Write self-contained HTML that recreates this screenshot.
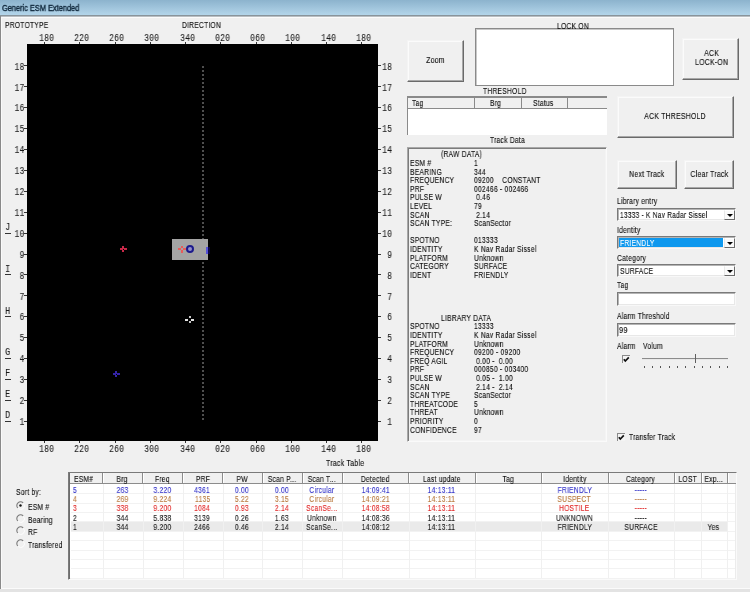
<!DOCTYPE html><html><head><meta charset="utf-8"><style>
*{margin:0;padding:0;box-sizing:border-box}
html,body{width:750px;height:592px;overflow:hidden;background:#f0f0f0;font-family:"Liberation Sans",sans-serif;font-size:8.5px;color:#0c0c0c}
.a{position:absolute}
.t{position:absolute;white-space:nowrap;line-height:10px;letter-spacing:.3px;transform:scaleX(0.79);transform-origin:0 0;will-change:transform;-webkit-text-stroke:0.12px currentColor}
.c{display:inline-block;white-space:nowrap;letter-spacing:.3px;transform:scaleX(0.79);will-change:transform;-webkit-text-stroke:0.12px currentColor}
#title{left:0;top:0;width:750px;height:15px;background:linear-gradient(#8cb3cd,#b3d5ea)}
.btn{position:absolute;background:#f0f0f0;border-top:1px solid #f4f4f4;border-left:1px solid #f4f4f4;border-right:1px solid #6a6a6a;border-bottom:1px solid #6a6a6a;box-shadow:inset -1px -1px 0 #a8a8a8, inset 1px 1px 0 #fbfbfb;display:flex;align-items:center;justify-content:center;text-align:center;line-height:9px;padding-bottom:1px}
.btn .c{transform:scaleX(.81)}
.sunk{position:absolute;background:#fff;border-top:1px solid #a0a0a0;border-left:1px solid #a0a0a0;border-right:1px solid #fafafa;border-bottom:1px solid #fafafa;box-shadow:inset 1px 1px 0 #6c6c6c, inset -1px -1px 0 #ececec}
.mono{position:absolute;white-space:nowrap;font-family:"Liberation Mono",monospace;font-size:10px;line-height:9px;color:#1a1a1a;will-change:transform;transform:scaleX(.84);transform-origin:0 0;-webkit-text-stroke:0.05px #1a1a1a}
.cb{position:absolute;background:#fff;border-top:1px solid #7a7a7a;border-left:1px solid #7a7a7a;border-right:1px solid #f8f8f8;border-bottom:1px solid #f8f8f8;box-shadow:inset 1px 1px 0 #b4b4b4, inset -1px -1px 0 #e8e8e8}
.dd{position:absolute;top:1px;right:0px;bottom:0px;width:11px;background:#fafafa;border-top:1px solid #fff;border-left:1px solid #e8e8e8;border-right:1px solid #6a6a6a;border-bottom:1px solid #6a6a6a}
.dd:after{content:"";position:absolute;left:2px;top:3px;border-left:3px solid transparent;border-right:3px solid transparent;border-top:3px solid #000}
</style></head><body>
<div class="a" id="title"></div>
<div class="t" style="left:2px;top:2.6px;color:#10283c;transform:scaleX(.87);letter-spacing:0;-webkit-text-stroke:0.4px #10283c">Generic ESM Extended</div>
<div class="a" style="left:0px;top:15px;width:750px;height:1px;background:#89949b;"></div>
<div class="a" style="left:0px;top:16px;width:750px;height:1px;background:#b9bec2;"></div>
<div class="a" style="left:0px;top:17px;width:750px;height:1px;background:#fbfbfb;"></div>
<div class="a" style="left:0px;top:16px;width:1px;height:576px;background:#8a8a8a;"></div>
<div class="a" style="left:1px;top:18px;width:1px;height:574px;background:#fafafa;"></div>
<div class="t" style="left:5px;top:20px;">PROTOTYPE</div>
<div class="t" style="left:182px;top:20px;">DIRECTION</div>
<div class="a" style="left:27px;top:44px;width:351px;height:397px;background:#000;"></div>
<div class="a" style="left:44px;top:42px;width:1px;height:2px;background:#333;"></div>
<div class="a" style="left:44px;top:441px;width:1px;height:2px;background:#333;"></div>
<div class="mono" style="left:38.7px;top:33.8px">180</div>
<div class="mono" style="left:38.7px;top:444.9px">180</div>
<div class="a" style="left:79px;top:42px;width:1px;height:2px;background:#333;"></div>
<div class="a" style="left:79px;top:441px;width:1px;height:2px;background:#333;"></div>
<div class="mono" style="left:73.9px;top:33.8px">220</div>
<div class="mono" style="left:73.9px;top:444.9px">220</div>
<div class="a" style="left:115px;top:42px;width:1px;height:2px;background:#333;"></div>
<div class="a" style="left:115px;top:441px;width:1px;height:2px;background:#333;"></div>
<div class="mono" style="left:109.2px;top:33.8px">260</div>
<div class="mono" style="left:109.2px;top:444.9px">260</div>
<div class="a" style="left:150px;top:42px;width:1px;height:2px;background:#333;"></div>
<div class="a" style="left:150px;top:441px;width:1px;height:2px;background:#333;"></div>
<div class="mono" style="left:144.4px;top:33.8px">300</div>
<div class="mono" style="left:144.4px;top:444.9px">300</div>
<div class="a" style="left:185px;top:42px;width:1px;height:2px;background:#333;"></div>
<div class="a" style="left:185px;top:441px;width:1px;height:2px;background:#333;"></div>
<div class="mono" style="left:179.6px;top:33.8px">340</div>
<div class="mono" style="left:179.6px;top:444.9px">340</div>
<div class="a" style="left:220px;top:42px;width:1px;height:2px;background:#333;"></div>
<div class="a" style="left:220px;top:441px;width:1px;height:2px;background:#333;"></div>
<div class="mono" style="left:214.8px;top:33.8px">020</div>
<div class="mono" style="left:214.8px;top:444.9px">020</div>
<div class="a" style="left:256px;top:42px;width:1px;height:2px;background:#333;"></div>
<div class="a" style="left:256px;top:441px;width:1px;height:2px;background:#333;"></div>
<div class="mono" style="left:250.1px;top:33.8px">060</div>
<div class="mono" style="left:250.1px;top:444.9px">060</div>
<div class="a" style="left:291px;top:42px;width:1px;height:2px;background:#333;"></div>
<div class="a" style="left:291px;top:441px;width:1px;height:2px;background:#333;"></div>
<div class="mono" style="left:285.3px;top:33.8px">100</div>
<div class="mono" style="left:285.3px;top:444.9px">100</div>
<div class="a" style="left:326px;top:42px;width:1px;height:2px;background:#333;"></div>
<div class="a" style="left:326px;top:441px;width:1px;height:2px;background:#333;"></div>
<div class="mono" style="left:320.5px;top:33.8px">140</div>
<div class="mono" style="left:320.5px;top:444.9px">140</div>
<div class="a" style="left:361px;top:42px;width:1px;height:2px;background:#333;"></div>
<div class="a" style="left:361px;top:441px;width:1px;height:2px;background:#333;"></div>
<div class="mono" style="left:355.8px;top:33.8px">180</div>
<div class="mono" style="left:355.8px;top:444.9px">180</div>
<div class="a" style="left:24px;top:65px;width:3px;height:1px;background:#333;"></div>
<div class="a" style="left:378px;top:65px;width:3px;height:1px;background:#333;"></div>
<div class="mono" style="left:0;width:24.4px;text-align:right;transform-origin:100% 0;top:62.6px">18</div>
<div class="mono" style="left:381.5px;top:62.6px">18</div>
<div class="a" style="left:24px;top:86px;width:3px;height:1px;background:#333;"></div>
<div class="a" style="left:378px;top:86px;width:3px;height:1px;background:#333;"></div>
<div class="mono" style="left:0;width:24.4px;text-align:right;transform-origin:100% 0;top:83.5px">17</div>
<div class="mono" style="left:381.5px;top:83.5px">17</div>
<div class="a" style="left:24px;top:107px;width:3px;height:1px;background:#333;"></div>
<div class="a" style="left:378px;top:107px;width:3px;height:1px;background:#333;"></div>
<div class="mono" style="left:0;width:24.4px;text-align:right;transform-origin:100% 0;top:104.4px">16</div>
<div class="mono" style="left:381.5px;top:104.4px">16</div>
<div class="a" style="left:24px;top:128px;width:3px;height:1px;background:#333;"></div>
<div class="a" style="left:378px;top:128px;width:3px;height:1px;background:#333;"></div>
<div class="mono" style="left:0;width:24.4px;text-align:right;transform-origin:100% 0;top:125.3px">15</div>
<div class="mono" style="left:381.5px;top:125.3px">15</div>
<div class="a" style="left:24px;top:149px;width:3px;height:1px;background:#333;"></div>
<div class="a" style="left:378px;top:149px;width:3px;height:1px;background:#333;"></div>
<div class="mono" style="left:0;width:24.4px;text-align:right;transform-origin:100% 0;top:146.2px">14</div>
<div class="mono" style="left:381.5px;top:146.2px">14</div>
<div class="a" style="left:24px;top:170px;width:3px;height:1px;background:#333;"></div>
<div class="a" style="left:378px;top:170px;width:3px;height:1px;background:#333;"></div>
<div class="mono" style="left:0;width:24.4px;text-align:right;transform-origin:100% 0;top:167.1px">13</div>
<div class="mono" style="left:381.5px;top:167.1px">13</div>
<div class="a" style="left:24px;top:191px;width:3px;height:1px;background:#333;"></div>
<div class="a" style="left:378px;top:191px;width:3px;height:1px;background:#333;"></div>
<div class="mono" style="left:0;width:24.4px;text-align:right;transform-origin:100% 0;top:188.0px">12</div>
<div class="mono" style="left:381.5px;top:188.0px">12</div>
<div class="a" style="left:24px;top:212px;width:3px;height:1px;background:#333;"></div>
<div class="a" style="left:378px;top:212px;width:3px;height:1px;background:#333;"></div>
<div class="mono" style="left:0;width:24.4px;text-align:right;transform-origin:100% 0;top:208.9px">11</div>
<div class="mono" style="left:381.5px;top:208.9px">11</div>
<div class="a" style="left:24px;top:233px;width:3px;height:1px;background:#333;"></div>
<div class="a" style="left:378px;top:233px;width:3px;height:1px;background:#333;"></div>
<div class="mono" style="left:0;width:24.4px;text-align:right;transform-origin:100% 0;top:229.8px">10</div>
<div class="mono" style="left:381.5px;top:229.8px">10</div>
<div class="a" style="left:24px;top:254px;width:3px;height:1px;background:#333;"></div>
<div class="a" style="left:378px;top:254px;width:3px;height:1px;background:#333;"></div>
<div class="mono" style="left:0;width:24.4px;text-align:right;transform-origin:100% 0;top:250.7px">9</div>
<div class="mono" style="left:381.5px;top:250.7px">&nbsp;9</div>
<div class="a" style="left:24px;top:274px;width:3px;height:1px;background:#333;"></div>
<div class="a" style="left:378px;top:274px;width:3px;height:1px;background:#333;"></div>
<div class="mono" style="left:0;width:24.4px;text-align:right;transform-origin:100% 0;top:271.6px">8</div>
<div class="mono" style="left:381.5px;top:271.6px">&nbsp;8</div>
<div class="a" style="left:24px;top:295px;width:3px;height:1px;background:#333;"></div>
<div class="a" style="left:378px;top:295px;width:3px;height:1px;background:#333;"></div>
<div class="mono" style="left:0;width:24.4px;text-align:right;transform-origin:100% 0;top:292.5px">7</div>
<div class="mono" style="left:381.5px;top:292.5px">&nbsp;7</div>
<div class="a" style="left:24px;top:316px;width:3px;height:1px;background:#333;"></div>
<div class="a" style="left:378px;top:316px;width:3px;height:1px;background:#333;"></div>
<div class="mono" style="left:0;width:24.4px;text-align:right;transform-origin:100% 0;top:313.4px">6</div>
<div class="mono" style="left:381.5px;top:313.4px">&nbsp;6</div>
<div class="a" style="left:24px;top:337px;width:3px;height:1px;background:#333;"></div>
<div class="a" style="left:378px;top:337px;width:3px;height:1px;background:#333;"></div>
<div class="mono" style="left:0;width:24.4px;text-align:right;transform-origin:100% 0;top:334.3px">5</div>
<div class="mono" style="left:381.5px;top:334.3px">&nbsp;5</div>
<div class="a" style="left:24px;top:358px;width:3px;height:1px;background:#333;"></div>
<div class="a" style="left:378px;top:358px;width:3px;height:1px;background:#333;"></div>
<div class="mono" style="left:0;width:24.4px;text-align:right;transform-origin:100% 0;top:355.2px">4</div>
<div class="mono" style="left:381.5px;top:355.2px">&nbsp;4</div>
<div class="a" style="left:24px;top:379px;width:3px;height:1px;background:#333;"></div>
<div class="a" style="left:378px;top:379px;width:3px;height:1px;background:#333;"></div>
<div class="mono" style="left:0;width:24.4px;text-align:right;transform-origin:100% 0;top:376.1px">3</div>
<div class="mono" style="left:381.5px;top:376.1px">&nbsp;3</div>
<div class="a" style="left:24px;top:400px;width:3px;height:1px;background:#333;"></div>
<div class="a" style="left:378px;top:400px;width:3px;height:1px;background:#333;"></div>
<div class="mono" style="left:0;width:24.4px;text-align:right;transform-origin:100% 0;top:397.0px">2</div>
<div class="mono" style="left:381.5px;top:397.0px">&nbsp;2</div>
<div class="a" style="left:24px;top:421px;width:3px;height:1px;background:#333;"></div>
<div class="a" style="left:378px;top:421px;width:3px;height:1px;background:#333;"></div>
<div class="mono" style="left:0;width:24.4px;text-align:right;transform-origin:100% 0;top:417.9px">1</div>
<div class="mono" style="left:381.5px;top:417.9px">&nbsp;1</div>
<div class="mono" style="left:5px;top:223.0px;font-size:10.5px">J</div>
<div class="a" style="left:5px;top:233px;width:6px;height:1px;background:#333;"></div>
<div class="mono" style="left:5px;top:264.8px;font-size:10.5px">I</div>
<div class="a" style="left:5px;top:274px;width:6px;height:1px;background:#333;"></div>
<div class="mono" style="left:5px;top:306.6px;font-size:10.5px">H</div>
<div class="a" style="left:5px;top:316px;width:6px;height:1px;background:#333;"></div>
<div class="mono" style="left:5px;top:348.4px;font-size:10.5px">G</div>
<div class="a" style="left:5px;top:358px;width:6px;height:1px;background:#333;"></div>
<div class="mono" style="left:5px;top:369.3px;font-size:10.5px">F</div>
<div class="a" style="left:5px;top:379px;width:6px;height:1px;background:#333;"></div>
<div class="mono" style="left:5px;top:390.2px;font-size:10.5px">E</div>
<div class="a" style="left:5px;top:400px;width:6px;height:1px;background:#333;"></div>
<div class="mono" style="left:5px;top:411.1px;font-size:10.5px">D</div>
<div class="a" style="left:5px;top:421px;width:6px;height:1px;background:#333;"></div>
<div class="a" style="left:202px;top:66px;width:2px;height:2px;background:#4e4e4e;"></div>
<div class="a" style="left:202px;top:70px;width:2px;height:2px;background:#4e4e4e;"></div>
<div class="a" style="left:202px;top:74px;width:2px;height:2px;background:#4e4e4e;"></div>
<div class="a" style="left:202px;top:78px;width:2px;height:2px;background:#4e4e4e;"></div>
<div class="a" style="left:202px;top:82px;width:2px;height:2px;background:#4e4e4e;"></div>
<div class="a" style="left:202px;top:86px;width:2px;height:2px;background:#4e4e4e;"></div>
<div class="a" style="left:202px;top:90px;width:2px;height:2px;background:#4e4e4e;"></div>
<div class="a" style="left:202px;top:94px;width:2px;height:2px;background:#4e4e4e;"></div>
<div class="a" style="left:202px;top:98px;width:2px;height:2px;background:#4e4e4e;"></div>
<div class="a" style="left:202px;top:102px;width:2px;height:2px;background:#4e4e4e;"></div>
<div class="a" style="left:202px;top:106px;width:2px;height:2px;background:#4e4e4e;"></div>
<div class="a" style="left:202px;top:110px;width:2px;height:2px;background:#4e4e4e;"></div>
<div class="a" style="left:202px;top:114px;width:2px;height:2px;background:#4e4e4e;"></div>
<div class="a" style="left:202px;top:118px;width:2px;height:2px;background:#4e4e4e;"></div>
<div class="a" style="left:202px;top:122px;width:2px;height:2px;background:#4e4e4e;"></div>
<div class="a" style="left:202px;top:126px;width:2px;height:2px;background:#4e4e4e;"></div>
<div class="a" style="left:202px;top:130px;width:2px;height:2px;background:#4e4e4e;"></div>
<div class="a" style="left:202px;top:134px;width:2px;height:2px;background:#4e4e4e;"></div>
<div class="a" style="left:202px;top:138px;width:2px;height:2px;background:#4e4e4e;"></div>
<div class="a" style="left:202px;top:142px;width:2px;height:2px;background:#4e4e4e;"></div>
<div class="a" style="left:202px;top:146px;width:2px;height:2px;background:#4e4e4e;"></div>
<div class="a" style="left:202px;top:150px;width:2px;height:2px;background:#4e4e4e;"></div>
<div class="a" style="left:202px;top:154px;width:2px;height:2px;background:#4e4e4e;"></div>
<div class="a" style="left:202px;top:158px;width:2px;height:2px;background:#4e4e4e;"></div>
<div class="a" style="left:202px;top:162px;width:2px;height:2px;background:#4e4e4e;"></div>
<div class="a" style="left:202px;top:166px;width:2px;height:2px;background:#4e4e4e;"></div>
<div class="a" style="left:202px;top:170px;width:2px;height:2px;background:#4e4e4e;"></div>
<div class="a" style="left:202px;top:174px;width:2px;height:2px;background:#4e4e4e;"></div>
<div class="a" style="left:202px;top:178px;width:2px;height:2px;background:#4e4e4e;"></div>
<div class="a" style="left:202px;top:182px;width:2px;height:2px;background:#4e4e4e;"></div>
<div class="a" style="left:202px;top:186px;width:2px;height:2px;background:#4e4e4e;"></div>
<div class="a" style="left:202px;top:190px;width:2px;height:2px;background:#4e4e4e;"></div>
<div class="a" style="left:202px;top:194px;width:2px;height:2px;background:#4e4e4e;"></div>
<div class="a" style="left:202px;top:198px;width:2px;height:2px;background:#4e4e4e;"></div>
<div class="a" style="left:202px;top:202px;width:2px;height:2px;background:#4e4e4e;"></div>
<div class="a" style="left:202px;top:206px;width:2px;height:2px;background:#4e4e4e;"></div>
<div class="a" style="left:202px;top:210px;width:2px;height:2px;background:#4e4e4e;"></div>
<div class="a" style="left:202px;top:214px;width:2px;height:2px;background:#4e4e4e;"></div>
<div class="a" style="left:202px;top:218px;width:2px;height:2px;background:#4e4e4e;"></div>
<div class="a" style="left:202px;top:222px;width:2px;height:2px;background:#4e4e4e;"></div>
<div class="a" style="left:202px;top:226px;width:2px;height:2px;background:#4e4e4e;"></div>
<div class="a" style="left:202px;top:230px;width:2px;height:2px;background:#4e4e4e;"></div>
<div class="a" style="left:202px;top:234px;width:2px;height:2px;background:#4e4e4e;"></div>
<div class="a" style="left:202px;top:238px;width:2px;height:2px;background:#4e4e4e;"></div>
<div class="a" style="left:202px;top:242px;width:2px;height:2px;background:#4e4e4e;"></div>
<div class="a" style="left:202px;top:246px;width:2px;height:2px;background:#4e4e4e;"></div>
<div class="a" style="left:202px;top:250px;width:2px;height:2px;background:#4e4e4e;"></div>
<div class="a" style="left:202px;top:254px;width:2px;height:2px;background:#4e4e4e;"></div>
<div class="a" style="left:202px;top:258px;width:2px;height:2px;background:#4e4e4e;"></div>
<div class="a" style="left:202px;top:262px;width:2px;height:2px;background:#4e4e4e;"></div>
<div class="a" style="left:202px;top:266px;width:2px;height:2px;background:#4e4e4e;"></div>
<div class="a" style="left:202px;top:270px;width:2px;height:2px;background:#4e4e4e;"></div>
<div class="a" style="left:202px;top:274px;width:2px;height:2px;background:#4e4e4e;"></div>
<div class="a" style="left:202px;top:278px;width:2px;height:2px;background:#4e4e4e;"></div>
<div class="a" style="left:202px;top:282px;width:2px;height:2px;background:#4e4e4e;"></div>
<div class="a" style="left:202px;top:286px;width:2px;height:2px;background:#4e4e4e;"></div>
<div class="a" style="left:202px;top:290px;width:2px;height:2px;background:#4e4e4e;"></div>
<div class="a" style="left:202px;top:294px;width:2px;height:2px;background:#4e4e4e;"></div>
<div class="a" style="left:202px;top:298px;width:2px;height:2px;background:#4e4e4e;"></div>
<div class="a" style="left:202px;top:302px;width:2px;height:2px;background:#4e4e4e;"></div>
<div class="a" style="left:202px;top:306px;width:2px;height:2px;background:#4e4e4e;"></div>
<div class="a" style="left:202px;top:310px;width:2px;height:2px;background:#4e4e4e;"></div>
<div class="a" style="left:202px;top:314px;width:2px;height:2px;background:#4e4e4e;"></div>
<div class="a" style="left:202px;top:318px;width:2px;height:2px;background:#4e4e4e;"></div>
<div class="a" style="left:202px;top:322px;width:2px;height:2px;background:#4e4e4e;"></div>
<div class="a" style="left:202px;top:326px;width:2px;height:2px;background:#4e4e4e;"></div>
<div class="a" style="left:202px;top:330px;width:2px;height:2px;background:#4e4e4e;"></div>
<div class="a" style="left:202px;top:334px;width:2px;height:2px;background:#4e4e4e;"></div>
<div class="a" style="left:202px;top:338px;width:2px;height:2px;background:#4e4e4e;"></div>
<div class="a" style="left:202px;top:342px;width:2px;height:2px;background:#4e4e4e;"></div>
<div class="a" style="left:202px;top:346px;width:2px;height:2px;background:#4e4e4e;"></div>
<div class="a" style="left:202px;top:350px;width:2px;height:2px;background:#4e4e4e;"></div>
<div class="a" style="left:202px;top:354px;width:2px;height:2px;background:#4e4e4e;"></div>
<div class="a" style="left:202px;top:358px;width:2px;height:2px;background:#4e4e4e;"></div>
<div class="a" style="left:202px;top:362px;width:2px;height:2px;background:#4e4e4e;"></div>
<div class="a" style="left:202px;top:366px;width:2px;height:2px;background:#4e4e4e;"></div>
<div class="a" style="left:202px;top:370px;width:2px;height:2px;background:#4e4e4e;"></div>
<div class="a" style="left:202px;top:374px;width:2px;height:2px;background:#4e4e4e;"></div>
<div class="a" style="left:202px;top:378px;width:2px;height:2px;background:#4e4e4e;"></div>
<div class="a" style="left:202px;top:382px;width:2px;height:2px;background:#4e4e4e;"></div>
<div class="a" style="left:202px;top:386px;width:2px;height:2px;background:#4e4e4e;"></div>
<div class="a" style="left:202px;top:390px;width:2px;height:2px;background:#4e4e4e;"></div>
<div class="a" style="left:202px;top:394px;width:2px;height:2px;background:#4e4e4e;"></div>
<div class="a" style="left:202px;top:398px;width:2px;height:2px;background:#4e4e4e;"></div>
<div class="a" style="left:202px;top:402px;width:2px;height:2px;background:#4e4e4e;"></div>
<div class="a" style="left:202px;top:406px;width:2px;height:2px;background:#4e4e4e;"></div>
<div class="a" style="left:202px;top:410px;width:2px;height:2px;background:#4e4e4e;"></div>
<div class="a" style="left:202px;top:414px;width:2px;height:2px;background:#4e4e4e;"></div>
<div class="a" style="left:202px;top:418px;width:2px;height:2px;background:#4e4e4e;"></div>
<div class="a" style="left:172px;top:239px;width:36px;height:21px;background:#a4a4a4;"></div>
<div class="a" style="left:205.5px;top:246.5px;width:2.5px;height:7px;background:#5450d8;"></div>
<div class="a" style="left:208px;top:246.5px;width:2px;height:7px;background:#0c0840;"></div>
<div class="a" style="left:178.0px;top:248.0px;width:3px;height:2px;background:#e85a5a;"></div>
<div class="a" style="left:183.0px;top:248.0px;width:3px;height:2px;background:#e85a5a;"></div>
<div class="a" style="left:181.0px;top:245.5px;width:2px;height:2.5px;background:#e85a5a;"></div>
<div class="a" style="left:181.0px;top:250.0px;width:2px;height:2.5px;background:#e85a5a;"></div>
<div class="a" style="left:119.5px;top:248.0px;width:3px;height:2px;background:#c82848;"></div>
<div class="a" style="left:123.5px;top:248.0px;width:3px;height:2px;background:#c82848;"></div>
<div class="a" style="left:122.0px;top:246.0px;width:2px;height:2.5px;background:#c82848;"></div>
<div class="a" style="left:122.0px;top:249.5px;width:2px;height:2.5px;background:#c82848;"></div>
<div class="a" style="left:185px;top:318.5px;width:3px;height:2px;background:#e4e4e4;"></div>
<div class="a" style="left:190.5px;top:318.5px;width:3px;height:2px;background:#e4e4e4;"></div>
<div class="a" style="left:188.5px;top:315.5px;width:2px;height:2.5px;background:#c4c4c4;"></div>
<div class="a" style="left:188.5px;top:320.5px;width:2px;height:2.5px;background:#c4c4c4;"></div>
<div class="a" style="left:112.5px;top:373.0px;width:3px;height:2px;background:#3424a8;"></div>
<div class="a" style="left:116.5px;top:373.0px;width:3px;height:2px;background:#3424a8;"></div>
<div class="a" style="left:115.0px;top:371.0px;width:2px;height:2.5px;background:#3424a8;"></div>
<div class="a" style="left:115.0px;top:374.5px;width:2px;height:2.5px;background:#3424a8;"></div>
<div class="a" style="left:185.5px;top:244.5px;width:8.5px;height:8.5px;background:#9490c8;border-radius:50%;border:2px solid #1c1a8c"></div>
<div class="btn" style="left:407px;top:40px;width:57px;height:42px"><span class="c">Zoom</span></div>
<div class="btn" style="left:682px;top:38px;width:57px;height:42px"><span class="c"><span style="line-height:8.8px;display:inline-block;position:relative;left:1.5px;top:-0.6px">ACK<br>LOCK-ON</span></span></div>
<div class="btn" style="left:617px;top:96px;width:117px;height:42px"><span class="c">ACK THRESHOLD</span></div>
<div class="btn" style="left:617px;top:160px;width:60px;height:29px"><span class="c">Next Track</span></div>
<div class="btn" style="left:684px;top:160px;width:50px;height:29px"><span class="c">Clear Track</span></div>
<div class="a" style="left:475px;top:28px;width:199px;height:58px;background:#fff;border:1px solid #8a8a8a;box-shadow:inset 1px 1px 0 #c8c8c8"></div>
<div class="t" style="left:557px;top:20.5px;">LOCK ON</div>
<div class="t" style="left:483px;top:86px;">THRESHOLD</div>
<div class="a" style="left:407px;top:96px;width:200px;height:39px;background:#fff;border-top:2px solid #8a8a8a;border-left:1px solid #8a8a8a"></div>
<div class="a" style="left:408px;top:98px;width:199px;height:11px;background:#f0f0f0;border-bottom:1px solid #8a8a8a"></div>
<div class="a" style="left:474px;top:98px;width:1px;height:11px;background:#8a8a8a;"></div>
<div class="a" style="left:521px;top:98px;width:1px;height:11px;background:#8a8a8a;"></div>
<div class="a" style="left:567px;top:98px;width:1px;height:11px;background:#8a8a8a;"></div>
<div class="t" style="left:412px;top:98px;">Tag</div>
<div class="t" style="left:490px;top:98px;">Brg</div>
<div class="t" style="left:533px;top:98px;">Status</div>
<div class="t" style="left:490px;top:135px;">Track Data</div>
<div class="sunk" style="left:407px;top:147px;width:200px;height:295px;background:#f0f0f0;border-top-color:#a8a8a8;border-left-color:#a8a8a8;box-shadow:inset 1px 1px 0 #7c7c7c, inset -1px -1px 0 #f4f4f4"></div>
<div class="t" style="left:441px;top:149.3px;">(RAW DATA)</div>
<div class="t" style="left:409.5px;top:157.9px;">ESM #</div>
<div class="t" style="left:473.5px;top:157.9px;">1</div>
<div class="t" style="left:409.5px;top:166.5px;">BEARING</div>
<div class="t" style="left:473.5px;top:166.5px;">344</div>
<div class="t" style="left:409.5px;top:175.1px;">FREQUENCY</div>
<div class="t" style="left:473.5px;top:175.1px;">09200&nbsp;&nbsp;&nbsp;&nbsp;CONSTANT</div>
<div class="t" style="left:409.5px;top:183.7px;">PRF</div>
<div class="t" style="left:473.5px;top:183.7px;">002466 - 002466</div>
<div class="t" style="left:409.5px;top:192.3px;">PULSE W</div>
<div class="t" style="left:473.5px;top:192.3px;">&nbsp;0.46</div>
<div class="t" style="left:409.5px;top:200.9px;">LEVEL</div>
<div class="t" style="left:473.5px;top:200.9px;">79</div>
<div class="t" style="left:409.5px;top:209.5px;">SCAN</div>
<div class="t" style="left:473.5px;top:209.5px;">&nbsp;2.14</div>
<div class="t" style="left:409.5px;top:218.1px;">SCAN TYPE:</div>
<div class="t" style="left:473.5px;top:218.1px;">ScanSector</div>
<div class="t" style="left:409.5px;top:235.3px;">SPOTNO</div>
<div class="t" style="left:473.5px;top:235.3px;">013333</div>
<div class="t" style="left:409.5px;top:243.9px;">IDENTITY</div>
<div class="t" style="left:473.5px;top:243.9px;">K Nav Radar Sissel</div>
<div class="t" style="left:409.5px;top:252.5px;">PLATFORM</div>
<div class="t" style="left:473.5px;top:252.5px;">Unknown</div>
<div class="t" style="left:409.5px;top:261.1px;">CATEGORY</div>
<div class="t" style="left:473.5px;top:261.1px;">SURFACE</div>
<div class="t" style="left:409.5px;top:269.7px;">IDENT</div>
<div class="t" style="left:473.5px;top:269.7px;">FRIENDLY</div>
<div class="t" style="left:441px;top:312.7px;">LIBRARY DATA</div>
<div class="t" style="left:409.5px;top:321.3px;">SPOTNO</div>
<div class="t" style="left:473.5px;top:321.3px;">13333</div>
<div class="t" style="left:409.5px;top:329.9px;">IDENTITY</div>
<div class="t" style="left:473.5px;top:329.9px;">K Nav Radar Sissel</div>
<div class="t" style="left:409.5px;top:338.5px;">PLATFORM</div>
<div class="t" style="left:473.5px;top:338.5px;">Unknown</div>
<div class="t" style="left:409.5px;top:347.1px;">FREQUENCY</div>
<div class="t" style="left:473.5px;top:347.1px;">09200 - 09200</div>
<div class="t" style="left:409.5px;top:355.7px;">FREQ AGIL</div>
<div class="t" style="left:473.5px;top:355.7px;">&nbsp;0.00 -&nbsp; 0.00</div>
<div class="t" style="left:409.5px;top:364.3px;">PRF</div>
<div class="t" style="left:473.5px;top:364.3px;">000850 - 003400</div>
<div class="t" style="left:409.5px;top:372.9px;">PULSE W</div>
<div class="t" style="left:473.5px;top:372.9px;">&nbsp;0.05 -&nbsp; 1.00</div>
<div class="t" style="left:409.5px;top:381.5px;">SCAN</div>
<div class="t" style="left:473.5px;top:381.5px;">&nbsp;2.14 -&nbsp; 2.14</div>
<div class="t" style="left:409.5px;top:390.1px;">SCAN TYPE</div>
<div class="t" style="left:473.5px;top:390.1px;">ScanSector</div>
<div class="t" style="left:409.5px;top:398.7px;">THREATCODE</div>
<div class="t" style="left:473.5px;top:398.7px;">5</div>
<div class="t" style="left:409.5px;top:407.3px;">THREAT</div>
<div class="t" style="left:473.5px;top:407.3px;">Unknown</div>
<div class="t" style="left:409.5px;top:415.9px;">PRIORITY</div>
<div class="t" style="left:473.5px;top:415.9px;">0</div>
<div class="t" style="left:409.5px;top:424.5px;">CONFIDENCE</div>
<div class="t" style="left:473.5px;top:424.5px;">97</div>
<div class="t" style="left:617px;top:196px;">Library entry</div>
<div class="cb" style="left:617px;top:208px;width:119px;height:13px"><div class="t" style="left:2px;top:1px;transform:scaleX(.775)">13333 - K Nav Radar Sissel</div><div class="dd"></div></div>
<div class="t" style="left:617px;top:225px;">Identity</div>
<div class="cb" style="left:617px;top:236px;width:119px;height:13px"><div class="a" style="left:1px;top:1px;right:12px;bottom:1px;background:#0e98ee"></div><div class="t" style="left:2px;top:1px;color:#fff">FRIENDLY</div><div class="dd"></div></div>
<div class="t" style="left:617px;top:253px;">Category</div>
<div class="cb" style="left:617px;top:264px;width:119px;height:13px"><div class="t" style="left:2px;top:1px">SURFACE</div><div class="dd"></div></div>
<div class="t" style="left:617px;top:280.3px;">Tag</div>
<div class="cb" style="left:617px;top:292px;width:119px;height:14px"></div>
<div class="t" style="left:617px;top:311px;">Alarm Threshold</div>
<div class="cb" style="left:617px;top:323px;width:119px;height:14px"><div class="t" style="left:0.5px;top:0.6px;font-size:9.5px">99</div></div>
<div class="t" style="left:617px;top:341px;">Alarm</div>
<div class="t" style="left:643px;top:341px;">Volum</div>
<div class="a" style="left:622px;top:355px;width:8px;height:8px;background:#f4f4f4;border-top:1px solid #8a8a8a;border-left:1px solid #8a8a8a"></div>
<svg class="a" style="left:622px;top:355px" width="8" height="8"><path d="M1.8 4.2 L3.3 6 L6.8 2.4" stroke="#111" stroke-width="1.7" fill="none"/></svg>
<div class="a" style="left:642px;top:358px;width:86px;height:2px;background:#8c8c8c;border-bottom:1px solid #e8e8e8"></div>
<div class="a" style="left:694.5px;top:354px;width:1.2px;height:9px;background:#606060;"></div>
<div class="a" style="left:643.5px;top:366px;width:1px;height:2px;background:#555;"></div>
<div class="a" style="left:651.9px;top:366px;width:1px;height:2px;background:#555;"></div>
<div class="a" style="left:660.2px;top:366px;width:1px;height:2px;background:#555;"></div>
<div class="a" style="left:668.5px;top:366px;width:1px;height:2px;background:#555;"></div>
<div class="a" style="left:676.9px;top:366px;width:1px;height:2px;background:#555;"></div>
<div class="a" style="left:685.2px;top:366px;width:1px;height:2px;background:#555;"></div>
<div class="a" style="left:693.6px;top:366px;width:1px;height:2px;background:#555;"></div>
<div class="a" style="left:702.0px;top:366px;width:1px;height:2px;background:#555;"></div>
<div class="a" style="left:710.3px;top:366px;width:1px;height:2px;background:#555;"></div>
<div class="a" style="left:718.6px;top:366px;width:1px;height:2px;background:#555;"></div>
<div class="a" style="left:727.0px;top:366px;width:1px;height:2px;background:#555;"></div>
<div class="a" style="left:617px;top:433px;width:8px;height:8px;background:#f4f4f4;border-top:1px solid #8a8a8a;border-left:1px solid #8a8a8a"></div>
<svg class="a" style="left:617px;top:433px" width="8" height="8"><path d="M1.8 4.2 L3.3 6 L6.8 2.4" stroke="#111" stroke-width="1.7" fill="none"/></svg>
<div class="t" style="left:629px;top:432px;">Transfer Track</div>
<div class="t" style="left:326px;top:458.3px;transform:scaleX(.82)">Track Table</div>
<div class="sunk" style="left:68px;top:472px;width:669px;height:108px;background:#fff;border-top-color:#7a7a7a;border-left-color:#7a7a7a"></div>
<div class="a" style="left:70px;top:473px;width:666px;height:11px;background:#f0f0f0;border-bottom:1px solid #8c8c8c"></div>
<div class="a" style="left:102px;top:473px;width:1px;height:11px;background:#8c8c8c;"></div>
<div class="a" style="left:103px;top:473px;width:1px;height:10px;background:#fff;"></div>
<div class="t" style="left:74px;top:474.2px;">ESM#</div>
<div class="a" style="left:142px;top:473px;width:1px;height:11px;background:#8c8c8c;"></div>
<div class="a" style="left:143px;top:473px;width:1px;height:10px;background:#fff;"></div>
<div class="a" style="left:102.5px;top:473.7px;width:40.0px;height:11px;text-align:center;line-height:11px"><span class="c">Brg</span></div>
<div class="a" style="left:182px;top:473px;width:1px;height:11px;background:#8c8c8c;"></div>
<div class="a" style="left:183px;top:473px;width:1px;height:10px;background:#fff;"></div>
<div class="a" style="left:142.5px;top:473.7px;width:40.0px;height:11px;text-align:center;line-height:11px"><span class="c">Freq</span></div>
<div class="a" style="left:222px;top:473px;width:1px;height:11px;background:#8c8c8c;"></div>
<div class="a" style="left:223px;top:473px;width:1px;height:10px;background:#fff;"></div>
<div class="a" style="left:182.5px;top:473.7px;width:40.0px;height:11px;text-align:center;line-height:11px"><span class="c">PRF</span></div>
<div class="a" style="left:262px;top:473px;width:1px;height:11px;background:#8c8c8c;"></div>
<div class="a" style="left:263px;top:473px;width:1px;height:10px;background:#fff;"></div>
<div class="a" style="left:222.5px;top:473.7px;width:39.69999999999999px;height:11px;text-align:center;line-height:11px"><span class="c">PW</span></div>
<div class="a" style="left:302px;top:473px;width:1px;height:11px;background:#8c8c8c;"></div>
<div class="a" style="left:303px;top:473px;width:1px;height:10px;background:#fff;"></div>
<div class="a" style="left:262.2px;top:473.7px;width:39.80000000000001px;height:11px;text-align:center;line-height:11px"><span class="c">Scan P...</span></div>
<div class="a" style="left:342px;top:473px;width:1px;height:11px;background:#8c8c8c;"></div>
<div class="a" style="left:343px;top:473px;width:1px;height:10px;background:#fff;"></div>
<div class="a" style="left:302px;top:473.7px;width:40px;height:11px;text-align:center;line-height:11px"><span class="c">Scan T...</span></div>
<div class="a" style="left:408px;top:473px;width:1px;height:11px;background:#8c8c8c;"></div>
<div class="a" style="left:409px;top:473px;width:1px;height:10px;background:#fff;"></div>
<div class="a" style="left:342px;top:473.7px;width:66.5px;height:11px;text-align:center;line-height:11px"><span class="c">Detected</span></div>
<div class="a" style="left:475px;top:473px;width:1px;height:11px;background:#8c8c8c;"></div>
<div class="a" style="left:476px;top:473px;width:1px;height:10px;background:#fff;"></div>
<div class="a" style="left:408.5px;top:473.7px;width:66.5px;height:11px;text-align:center;line-height:11px"><span class="c">Last update</span></div>
<div class="a" style="left:541px;top:473px;width:1px;height:11px;background:#8c8c8c;"></div>
<div class="a" style="left:542px;top:473px;width:1px;height:10px;background:#fff;"></div>
<div class="a" style="left:475px;top:473.7px;width:66.20000000000005px;height:11px;text-align:center;line-height:11px"><span class="c">Tag</span></div>
<div class="a" style="left:608px;top:473px;width:1px;height:11px;background:#8c8c8c;"></div>
<div class="a" style="left:609px;top:473px;width:1px;height:10px;background:#fff;"></div>
<div class="a" style="left:541.2px;top:473.7px;width:66.5px;height:11px;text-align:center;line-height:11px"><span class="c">Identity</span></div>
<div class="a" style="left:674px;top:473px;width:1px;height:11px;background:#8c8c8c;"></div>
<div class="a" style="left:675px;top:473px;width:1px;height:10px;background:#fff;"></div>
<div class="a" style="left:607.7px;top:473.7px;width:66.29999999999995px;height:11px;text-align:center;line-height:11px"><span class="c">Category</span></div>
<div class="a" style="left:701px;top:473px;width:1px;height:11px;background:#8c8c8c;"></div>
<div class="a" style="left:702px;top:473px;width:1px;height:10px;background:#fff;"></div>
<div class="a" style="left:674px;top:473.7px;width:26.700000000000045px;height:11px;text-align:center;line-height:11px"><span class="c">LOST</span></div>
<div class="a" style="left:727px;top:473px;width:1px;height:11px;background:#8c8c8c;"></div>
<div class="a" style="left:728px;top:473px;width:1px;height:10px;background:#fff;"></div>
<div class="a" style="left:700.7px;top:473.7px;width:26.0px;height:11px;text-align:center;line-height:11px"><span class="c">Exp...</span></div>
<div class="a" style="left:71px;top:493.4px;width:664px;height:1px;background:#f2f2f2;"></div>
<div class="a" style="left:71px;top:502.7px;width:664px;height:1px;background:#f2f2f2;"></div>
<div class="a" style="left:71px;top:512.0px;width:664px;height:1px;background:#f2f2f2;"></div>
<div class="a" style="left:71px;top:521.4px;width:664px;height:1px;background:#f2f2f2;"></div>
<div class="a" style="left:71px;top:530.8px;width:664px;height:1px;background:#f2f2f2;"></div>
<div class="a" style="left:71px;top:540.1px;width:664px;height:1px;background:#f2f2f2;"></div>
<div class="a" style="left:71px;top:549.5px;width:664px;height:1px;background:#f2f2f2;"></div>
<div class="a" style="left:71px;top:558.8px;width:664px;height:1px;background:#f2f2f2;"></div>
<div class="a" style="left:71px;top:568.1px;width:664px;height:1px;background:#f2f2f2;"></div>
<div class="a" style="left:71px;top:577.5px;width:664px;height:1px;background:#f2f2f2;"></div>
<div class="a" style="left:71px;top:521.9px;width:656px;height:9.35px;background:#eaeaea;"></div>
<div class="a" style="left:102.5px;top:484px;width:1px;height:94px;background:#f0f0f0;"></div>
<div class="a" style="left:142.5px;top:484px;width:1px;height:94px;background:#f0f0f0;"></div>
<div class="a" style="left:182.5px;top:484px;width:1px;height:94px;background:#f0f0f0;"></div>
<div class="a" style="left:222.5px;top:484px;width:1px;height:94px;background:#f0f0f0;"></div>
<div class="a" style="left:262.2px;top:484px;width:1px;height:94px;background:#f0f0f0;"></div>
<div class="a" style="left:302.0px;top:484px;width:1px;height:94px;background:#f0f0f0;"></div>
<div class="a" style="left:342.0px;top:484px;width:1px;height:94px;background:#f0f0f0;"></div>
<div class="a" style="left:408.5px;top:484px;width:1px;height:94px;background:#f0f0f0;"></div>
<div class="a" style="left:475.0px;top:484px;width:1px;height:94px;background:#f0f0f0;"></div>
<div class="a" style="left:541.2px;top:484px;width:1px;height:94px;background:#f0f0f0;"></div>
<div class="a" style="left:607.7px;top:484px;width:1px;height:94px;background:#f0f0f0;"></div>
<div class="a" style="left:674.0px;top:484px;width:1px;height:94px;background:#f0f0f0;"></div>
<div class="a" style="left:700.7px;top:484px;width:1px;height:94px;background:#f0f0f0;"></div>
<div class="a" style="left:726.7px;top:484px;width:1px;height:94px;background:#f0f0f0;"></div>
<div class="t" style="left:73px;top:484.7px;color:#3030c8">5</div>
<div class="a" style="left:102.5px;top:484.7px;width:40.0px;text-align:center;line-height:10px;color:#3030c8"><span class="c">263</span></div>
<div class="a" style="left:142.5px;top:484.7px;width:40.0px;text-align:center;line-height:10px;color:#3030c8"><span class="c">3.220</span></div>
<div class="a" style="left:182.5px;top:484.7px;width:40.0px;text-align:center;line-height:10px;color:#3030c8"><span class="c">4361</span></div>
<div class="a" style="left:222.5px;top:484.7px;width:39.69999999999999px;text-align:center;line-height:10px;color:#3030c8"><span class="c">0.00</span></div>
<div class="a" style="left:262.2px;top:484.7px;width:39.80000000000001px;text-align:center;line-height:10px;color:#3030c8"><span class="c">0.00</span></div>
<div class="a" style="left:302px;top:484.7px;width:40px;text-align:center;line-height:10px;color:#3030c8"><span class="c">Circular</span></div>
<div class="a" style="left:342px;top:484.7px;width:66.5px;text-align:center;line-height:10px;color:#3030c8"><span class="c">14:09:41</span></div>
<div class="a" style="left:408.5px;top:484.7px;width:66.5px;text-align:center;line-height:10px;color:#3030c8"><span class="c">14:13:11</span></div>
<div class="a" style="left:541.2px;top:484.7px;width:66.5px;text-align:center;line-height:10px;color:#3030c8"><span class="c">FRIENDLY</span></div>
<div class="a" style="left:607.7px;top:484.7px;width:66.29999999999995px;text-align:center;line-height:10px;color:#3030c8"><span class="c">-----</span></div>
<div class="t" style="left:73px;top:494.1px;color:#b8783c">4</div>
<div class="a" style="left:102.5px;top:494.1px;width:40.0px;text-align:center;line-height:10px;color:#b8783c"><span class="c">269</span></div>
<div class="a" style="left:142.5px;top:494.1px;width:40.0px;text-align:center;line-height:10px;color:#b8783c"><span class="c">9.224</span></div>
<div class="a" style="left:182.5px;top:494.1px;width:40.0px;text-align:center;line-height:10px;color:#b8783c"><span class="c">1135</span></div>
<div class="a" style="left:222.5px;top:494.1px;width:39.69999999999999px;text-align:center;line-height:10px;color:#b8783c"><span class="c">5.22</span></div>
<div class="a" style="left:262.2px;top:494.1px;width:39.80000000000001px;text-align:center;line-height:10px;color:#b8783c"><span class="c">3.15</span></div>
<div class="a" style="left:302px;top:494.1px;width:40px;text-align:center;line-height:10px;color:#b8783c"><span class="c">Circular</span></div>
<div class="a" style="left:342px;top:494.1px;width:66.5px;text-align:center;line-height:10px;color:#b8783c"><span class="c">14:09:21</span></div>
<div class="a" style="left:408.5px;top:494.1px;width:66.5px;text-align:center;line-height:10px;color:#b8783c"><span class="c">14:13:11</span></div>
<div class="a" style="left:541.2px;top:494.1px;width:66.5px;text-align:center;line-height:10px;color:#b8783c"><span class="c">SUSPECT</span></div>
<div class="a" style="left:607.7px;top:494.1px;width:66.29999999999995px;text-align:center;line-height:10px;color:#b8783c"><span class="c">-----</span></div>
<div class="t" style="left:73px;top:503.4px;color:#e02828">3</div>
<div class="a" style="left:102.5px;top:503.4px;width:40.0px;text-align:center;line-height:10px;color:#e02828"><span class="c">338</span></div>
<div class="a" style="left:142.5px;top:503.4px;width:40.0px;text-align:center;line-height:10px;color:#e02828"><span class="c">9.200</span></div>
<div class="a" style="left:182.5px;top:503.4px;width:40.0px;text-align:center;line-height:10px;color:#e02828"><span class="c">1084</span></div>
<div class="a" style="left:222.5px;top:503.4px;width:39.69999999999999px;text-align:center;line-height:10px;color:#e02828"><span class="c">0.93</span></div>
<div class="a" style="left:262.2px;top:503.4px;width:39.80000000000001px;text-align:center;line-height:10px;color:#e02828"><span class="c">2.14</span></div>
<div class="a" style="left:302px;top:503.4px;width:40px;text-align:center;line-height:10px;color:#e02828"><span class="c">ScanSe...</span></div>
<div class="a" style="left:342px;top:503.4px;width:66.5px;text-align:center;line-height:10px;color:#e02828"><span class="c">14:08:58</span></div>
<div class="a" style="left:408.5px;top:503.4px;width:66.5px;text-align:center;line-height:10px;color:#e02828"><span class="c">14:13:11</span></div>
<div class="a" style="left:541.2px;top:503.4px;width:66.5px;text-align:center;line-height:10px;color:#e02828"><span class="c">HOSTILE</span></div>
<div class="a" style="left:607.7px;top:503.4px;width:66.29999999999995px;text-align:center;line-height:10px;color:#e02828"><span class="c">-----</span></div>
<div class="t" style="left:73px;top:512.8px;color:#161616">2</div>
<div class="a" style="left:102.5px;top:512.8px;width:40.0px;text-align:center;line-height:10px;color:#161616"><span class="c">344</span></div>
<div class="a" style="left:142.5px;top:512.8px;width:40.0px;text-align:center;line-height:10px;color:#161616"><span class="c">5.838</span></div>
<div class="a" style="left:182.5px;top:512.8px;width:40.0px;text-align:center;line-height:10px;color:#161616"><span class="c">3139</span></div>
<div class="a" style="left:222.5px;top:512.8px;width:39.69999999999999px;text-align:center;line-height:10px;color:#161616"><span class="c">0.26</span></div>
<div class="a" style="left:262.2px;top:512.8px;width:39.80000000000001px;text-align:center;line-height:10px;color:#161616"><span class="c">1.63</span></div>
<div class="a" style="left:302px;top:512.8px;width:40px;text-align:center;line-height:10px;color:#161616"><span class="c">Unknown</span></div>
<div class="a" style="left:342px;top:512.8px;width:66.5px;text-align:center;line-height:10px;color:#161616"><span class="c">14:08:36</span></div>
<div class="a" style="left:408.5px;top:512.8px;width:66.5px;text-align:center;line-height:10px;color:#161616"><span class="c">14:13:11</span></div>
<div class="a" style="left:541.2px;top:512.8px;width:66.5px;text-align:center;line-height:10px;color:#161616"><span class="c">UNKNOWN</span></div>
<div class="a" style="left:607.7px;top:512.8px;width:66.29999999999995px;text-align:center;line-height:10px;color:#161616"><span class="c">-----</span></div>
<div class="t" style="left:73px;top:522.1px;color:#161616">1</div>
<div class="a" style="left:102.5px;top:522.1px;width:40.0px;text-align:center;line-height:10px;color:#161616"><span class="c">344</span></div>
<div class="a" style="left:142.5px;top:522.1px;width:40.0px;text-align:center;line-height:10px;color:#161616"><span class="c">9.200</span></div>
<div class="a" style="left:182.5px;top:522.1px;width:40.0px;text-align:center;line-height:10px;color:#161616"><span class="c">2466</span></div>
<div class="a" style="left:222.5px;top:522.1px;width:39.69999999999999px;text-align:center;line-height:10px;color:#161616"><span class="c">0.46</span></div>
<div class="a" style="left:262.2px;top:522.1px;width:39.80000000000001px;text-align:center;line-height:10px;color:#161616"><span class="c">2.14</span></div>
<div class="a" style="left:302px;top:522.1px;width:40px;text-align:center;line-height:10px;color:#161616"><span class="c">ScanSe...</span></div>
<div class="a" style="left:342px;top:522.1px;width:66.5px;text-align:center;line-height:10px;color:#161616"><span class="c">14:08:12</span></div>
<div class="a" style="left:408.5px;top:522.1px;width:66.5px;text-align:center;line-height:10px;color:#161616"><span class="c">14:13:11</span></div>
<div class="a" style="left:541.2px;top:522.1px;width:66.5px;text-align:center;line-height:10px;color:#161616"><span class="c">FRIENDLY</span></div>
<div class="a" style="left:607.7px;top:522.1px;width:66.29999999999995px;text-align:center;line-height:10px;color:#161616"><span class="c">SURFACE</span></div>
<div class="a" style="left:700.7px;top:522.1px;width:26.0px;text-align:center;line-height:10px;color:#161616"><span class="c">Yes</span></div>
<div class="t" style="left:16px;top:487px;">Sort by:</div>
<svg class="a" style="left:16px;top:501.2px" width="9" height="9"><path d="M1.8 7 A3.4 3.4 0 0 1 7.2 2" fill="none" stroke="#7a7a7a" stroke-width="1.1"/><path d="M7.4 2.4 A3.4 3.4 0 0 1 2.2 7.4" fill="none" stroke="#fcfcfc" stroke-width="1"/><circle cx="4.5" cy="4.5" r="1.2" fill="#111"/></svg>
<div class="t" style="left:27.5px;top:502.0px;">ESM #</div>
<svg class="a" style="left:16px;top:513.7px" width="9" height="9"><path d="M1.8 7 A3.4 3.4 0 0 1 7.2 2" fill="none" stroke="#7a7a7a" stroke-width="1.1"/><path d="M7.4 2.4 A3.4 3.4 0 0 1 2.2 7.4" fill="none" stroke="#fcfcfc" stroke-width="1"/></svg>
<div class="t" style="left:27.5px;top:514.5px;">Bearing</div>
<svg class="a" style="left:16px;top:526.2px" width="9" height="9"><path d="M1.8 7 A3.4 3.4 0 0 1 7.2 2" fill="none" stroke="#7a7a7a" stroke-width="1.1"/><path d="M7.4 2.4 A3.4 3.4 0 0 1 2.2 7.4" fill="none" stroke="#fcfcfc" stroke-width="1"/></svg>
<div class="t" style="left:27.5px;top:527.0px;">RF</div>
<svg class="a" style="left:16px;top:538.7px" width="9" height="9"><path d="M1.8 7 A3.4 3.4 0 0 1 7.2 2" fill="none" stroke="#7a7a7a" stroke-width="1.1"/><path d="M7.4 2.4 A3.4 3.4 0 0 1 2.2 7.4" fill="none" stroke="#fcfcfc" stroke-width="1"/></svg>
<div class="t" style="left:27.5px;top:539.5px;">Transfered</div>
<div class="a" style="left:1px;top:588px;width:749px;height:1px;background:#fbfbfb;"></div>
<div class="a" style="left:0px;top:589px;width:750px;height:3px;background:#e3e3e3;"></div>
</body></html>
